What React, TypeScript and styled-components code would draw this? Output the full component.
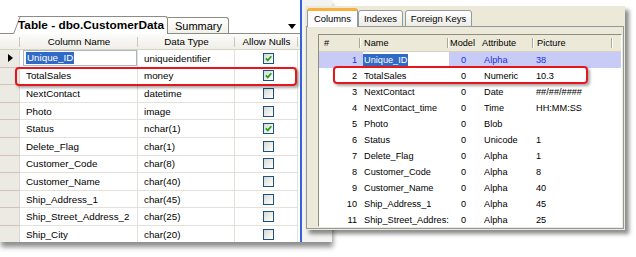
import React from "react"
import styled, { createGlobalStyle } from "styled-components"

const GlobalStyle = createGlobalStyle`
  *, *::before, *::after { box-sizing: border-box; }
  html, body { margin: 0; padding: 0; background: #ffffff; }
  body {
    width: 636px;
    height: 257px;
    overflow: hidden;
    font-family: "Liberation Sans", Arial, sans-serif;
    color: #000000;
  }
`

const Desktop = styled.div`
  position: relative;
  width: 636px;
  height: 257px;
  background: #ffffff;
  overflow: hidden;
`

/* ---------- left: table designer ---------- */

const designerCols = "20px 118px 97px 63px"

const DesignerWindow = styled.div`
  position: absolute;
  left: 0;
  top: 0;
  width: 332px;
  height: 242px;
  display: flex;
  background: #ffffff;
  box-shadow: 1px 5px 5px rgba(0, 0, 0, 0.45);
`

const DesignerMain = styled.div`
  width: 300px;
  flex-shrink: 0;
  display: flex;
  flex-direction: column;
  padding-top: 15px;
  overflow: hidden;
`

const Splitter = styled.div`
  width: 2px;
  flex-shrink: 0;
  background: #3562dc;
`

const DesignerAside = styled.div`
  flex: 1;
  background: #f3f3f0;
`

const DocTabStrip = styled.div`
  display: flex;
  align-items: flex-end;
  height: 19px;
  flex-shrink: 0;
  border-bottom: 1px solid #8d8c82;
`

const DocTab = styled.div<{ $active?: boolean }>`
  position: relative;
  z-index: ${({ $active }) => ($active ? 1 : 0)};
  margin-left: ${({ $active }) => ($active ? "18px" : "0")};
  margin-bottom: ${({ $active }) => ($active ? "-1px" : "0")};
  height: ${({ $active }) => ($active ? "18px" : "16px")};
  padding: ${({ $active }) => ($active ? "0 3px 1px 0" : "0 6px 0 7px")};
  display: flex;
  align-items: center;
  font-size: ${({ $active }) => ($active ? "11.8px" : "11px")};
  font-weight: ${({ $active }) => ($active ? 700 : 400)};
  white-space: nowrap;
  background: ${({ $active }) => ($active ? "#ffffff" : "linear-gradient(#ffffff, #f1f0ea)")};
  border-top: 1px solid #8d8c82;
  border-right: 1px solid #8d8c82;
  border-top-right-radius: 3px;

  &::before {
    content: "";
    display: ${({ $active }) => ($active ? "block" : "none")};
    position: absolute;
    left: -5px;
    top: -1px;
    bottom: 0;
    width: 14px;
    background: #ffffff;
    border-left: 1px solid #8d8c82;
    border-top: 1px solid #8d8c82;
    transform: skewX(-21deg);
    transform-origin: bottom left;
    z-index: -1;
  }
`

const DropArrow = styled.span`
  margin: 0 4px 4px auto;
  width: 0;
  height: 0;
  border-left: 4px solid transparent;
  border-right: 4px solid transparent;
  border-top: 5px solid #000000;
`

const DesignerHeader = styled.div`
  display: grid;
  grid-template-columns: ${designerCols};
  height: 16px;
  flex-shrink: 0;
  background: linear-gradient(#fcfcfa, #efeee7);
  border-bottom: 1px solid #d7d4c6;
`

const DesignerHeadCell = styled.div`
  position: relative;
  display: flex;
  align-items: center;
  justify-content: center;
  font-size: 9.8px;
  white-space: nowrap;

  &::after {
    content: "";
    position: absolute;
    right: 0;
    top: 3px;
    bottom: 2px;
    width: 1px;
    background: #cbc8b8;
  }
`

const DesignerRow = styled.div`
  position: relative;
  display: grid;
  grid-template-columns: ${designerCols};
  height: 17.6px;
  flex-shrink: 0;
`

const RowGutter = styled.div`
  display: flex;
  align-items: center;
  padding-left: 8px;
  background: #ecebe3;
  border-right: 1px solid #dcd9cc;
  border-bottom: 1px solid #d8bdbd;
`

const RowPointer = styled.span`
  width: 0;
  height: 0;
  border-top: 4px solid transparent;
  border-bottom: 4px solid transparent;
  border-left: 5px solid #000000;
`

const DesignerCell = styled.div<{ $center?: boolean }>`
  display: flex;
  align-items: center;
  justify-content: ${({ $center }) => ($center ? "center" : "flex-start")};
  padding-left: ${({ $center }) => ($center ? "4px" : "6px")};
  font-size: 9.8px;
  white-space: nowrap;
  overflow: hidden;
  border-right: 1px solid #e3e1d9;
  border-bottom: 1px solid #e3e1d9;
`

const EditBox = styled.div`
  flex: 1;
  align-self: stretch;
  margin: 0 0 1px -3px;
  padding-left: 2px;
  display: flex;
  align-items: center;
  border: 1px solid #aab7c9;
  background: #ffffff;
`

const Selection = styled.span`
  background: #316ac5;
  color: #ffffff;
  padding: 0 1px;
  line-height: 12px;
`

const CheckBox = styled.span`
  width: 11px;
  height: 11px;
  display: flex;
  align-items: center;
  justify-content: center;
  border: 1px solid #1c5180;
  background: linear-gradient(135deg, #d9d9d2, #ffffff);
`

const Callout = styled.div<{ $left: number; $top: number; $width: number; $height: number }>`
  position: absolute;
  left: ${({ $left }) => $left}px;
  top: ${({ $top }) => $top}px;
  width: ${({ $width }) => $width}px;
  height: ${({ $height }) => $height}px;
  border: 2px solid #e5161c;
  border-radius: 4px;
  box-shadow: 2px 2px 3px rgba(0, 0, 0, 0.35);
  pointer-events: none;
  z-index: 2;
`

/* ---------- right: attribute dialog ---------- */

const attrCols = "42px 88px 30px 55px 79px 1fr"

const DialogWindow = styled.div`
  position: absolute;
  left: 305px;
  top: 6px;
  width: 320px;
  height: 224px;
  display: flex;
  flex-direction: column;
  padding: 2px 1px 1px 1px;
  background: #ece9d8;
  box-shadow: 4px 4px 4px rgba(0, 0, 0, 0.45);
`

const DialogTabRow = styled.div`
  display: flex;
  align-items: flex-end;
  height: 19px;
  flex-shrink: 0;
  padding-left: 1px;
  position: relative;
  z-index: 1;
`

const DialogTab = styled.div<{ $active?: boolean }>`
  height: ${({ $active }) => ($active ? "19px" : "17px")};
  margin-right: ${({ $active }) => ($active ? "0" : "2px")};
  padding: ${({ $active }) => ($active ? "0 6px 1px" : "0 5px")};
  display: flex;
  align-items: center;
  font-size: 9.4px;
  white-space: nowrap;
  border: 1px solid #919b9c;
  border-bottom: ${({ $active }) => ($active ? "none" : "1px solid #919b9c")};
  border-top: ${({ $active }) => ($active ? "3px solid #f5b13b" : "1px solid #919b9c")};
  border-radius: 3px 3px 0 0;
  background: ${({ $active }) => ($active ? "#fcfcfe" : "linear-gradient(#ffffff, #ecebe6)")};
`

const DialogPanel = styled.div`
  flex: 1;
  display: flex;
  margin-top: -1px;
  padding: 7px 1px 1px 11px;
  border: 1px solid #919b9c;
  background: #ece9d8;
  overflow: hidden;
`

const AttrGrid = styled.div`
  flex: 1;
  display: flex;
  flex-direction: column;
  overflow: hidden;
  background: #ffffff;
  border: 1px solid;
  border-color: #8f8d80 #ffffff #ffffff #8f8d80;
`

const AttrHeader = styled.div`
  display: grid;
  grid-template-columns: ${attrCols};
  height: 17px;
  flex-shrink: 0;
  background: #ece9d8;
  border-bottom: 1px solid #d6d2c2;
`

const AttrHeadCell = styled.div<{ $pad: number; $sep?: boolean }>`
  position: relative;
  display: flex;
  align-items: center;
  padding-left: ${({ $pad }) => $pad}px;
  font-size: 9.2px;
  white-space: nowrap;

  &::after {
    content: "";
    display: ${({ $sep }) => ($sep ? "block" : "none")};
    position: absolute;
    right: 0;
    top: 3px;
    bottom: 3px;
    width: 2px;
    border-left: 1px solid #aca899;
    border-right: 1px solid #ffffff;
  }
`

const AttrRow = styled.div<{ $selected?: boolean }>`
  position: relative;
  display: grid;
  grid-template-columns: ${attrCols};
  height: 16px;
  flex-shrink: 0;
  background: ${({ $selected }) => ($selected ? "#c7cbf6" : "#ffffff")};
  color: ${({ $selected }) => ($selected ? "#1a2fe0" : "#000000")};
`

const AttrCell = styled.div<{ $pad: number; $right?: boolean }>`
  display: flex;
  align-items: center;
  justify-content: ${({ $right }) => ($right ? "flex-end" : "flex-start")};
  padding: ${({ $pad, $right }) => ($right ? `0 ${$pad}px 0 0` : `0 0 0 ${$pad}px`)};
  font-size: 9.2px;
  white-space: nowrap;
  overflow: hidden;
`

const NameEdit = styled.div`
  flex: 1;
  align-self: stretch;
  display: flex;
  align-items: center;
  margin-left: -1px;
  background: #ffffff;
`

/* ---------- data ---------- */

const designerRows = [
  { name: "Unique_ID", type: "uniqueidentifier", nulls: true },
  { name: "TotalSales", type: "money", nulls: true },
  { name: "NextContact", type: "datetime", nulls: false },
  { name: "Photo", type: "image", nulls: false },
  { name: "Status", type: "nchar(1)", nulls: true },
  { name: "Delete_Flag", type: "char(1)", nulls: false },
  { name: "Customer_Code", type: "char(8)", nulls: false },
  { name: "Customer_Name", type: "char(40)", nulls: false },
  { name: "Ship_Address_1", type: "char(45)", nulls: false },
  { name: "Ship_Street_Address_2", type: "char(25)", nulls: false },
  { name: "Ship_City", type: "char(20)", nulls: false },
]

// the last name is shown cut by its column in the dialog
const attributeRows = [
  { name: "Unique_ID", model: "0", attribute: "Alpha", picture: "38" },
  { name: "TotalSales", model: "0", attribute: "Numeric", picture: "10.3" },
  { name: "NextContact", model: "0", attribute: "Date", picture: "##/##/####" },
  { name: "NextContact_time", model: "0", attribute: "Time", picture: "HH:MM:SS" },
  { name: "Photo", model: "0", attribute: "Blob", picture: "" },
  { name: "Status", model: "0", attribute: "Unicode", picture: "1" },
  { name: "Delete_Flag", model: "0", attribute: "Alpha", picture: "1" },
  { name: "Customer_Code", model: "0", attribute: "Alpha", picture: "8" },
  { name: "Customer_Name", model: "0", attribute: "Alpha", picture: "40" },
  { name: "Ship_Address_1", model: "0", attribute: "Alpha", picture: "45" },
  { name: "Ship_Street_Addres:", model: "0", attribute: "Alpha", picture: "25" },
]

const Check = () => (
  <svg width="7" height="7" viewBox="0 0 7 7">
    <path d="M0.8 3.4 L2.8 5.4 L6.3 1.2" fill="none" stroke="#21a121" strokeWidth="1.7" />
  </svg>
)

const TableDesigner: React.FC = () => (
  <DesignerWindow>
    <DesignerMain>
      <DocTabStrip>
        <DocTab $active>Table - dbo.CustomerData</DocTab>
        <DocTab>Summary</DocTab>
        <DropArrow />
      </DocTabStrip>
      <DesignerHeader>
        <DesignerHeadCell />
        <DesignerHeadCell>Column Name</DesignerHeadCell>
        <DesignerHeadCell>Data Type</DesignerHeadCell>
        <DesignerHeadCell>Allow Nulls</DesignerHeadCell>
      </DesignerHeader>
      {designerRows.map((row, i) => (
        <DesignerRow key={row.name}>
          <RowGutter>{i === 0 && <RowPointer />}</RowGutter>
          <DesignerCell>
            {i === 0 ? (
              <EditBox>
                <Selection>{row.name}</Selection>
              </EditBox>
            ) : (
              row.name
            )}
          </DesignerCell>
          <DesignerCell>{row.type}</DesignerCell>
          <DesignerCell $center>
            <CheckBox>{row.nulls && <Check />}</CheckBox>
          </DesignerCell>
          {i === 1 && <Callout $left={15} $top={-1} $width={282} $height={19} />}
        </DesignerRow>
      ))}
    </DesignerMain>
    <Splitter />
    <DesignerAside />
  </DesignerWindow>
)

const AttributeDialog: React.FC = () => (
  <DialogWindow>
    <DialogTabRow>
      <DialogTab $active>Columns</DialogTab>
      <DialogTab>Indexes</DialogTab>
      <DialogTab>Foreign Keys</DialogTab>
    </DialogTabRow>
    <DialogPanel>
      <AttrGrid>
        <AttrHeader>
          <AttrHeadCell $pad={5} $sep>#</AttrHeadCell>
          <AttrHeadCell $pad={3} $sep>Name</AttrHeadCell>
          <AttrHeadCell $pad={1}>Model</AttrHeadCell>
          <AttrHeadCell $pad={3} $sep>Attribute</AttrHeadCell>
          <AttrHeadCell $pad={3} $sep>Picture</AttrHeadCell>
          <AttrHeadCell $pad={0} />
        </AttrHeader>
        {attributeRows.map((row, i) => (
          <AttrRow key={row.name} $selected={i === 0}>
            <AttrCell $pad={4} $right>
              {i + 1}
            </AttrCell>
            <AttrCell $pad={3}>
              {i === 0 ? (
                <NameEdit>
                  <Selection>{row.name}</Selection>
                </NameEdit>
              ) : (
                row.name
              )}
            </AttrCell>
            <AttrCell $pad={12}>{row.model}</AttrCell>
            <AttrCell $pad={5}>{row.attribute}</AttrCell>
            <AttrCell $pad={2}>{row.picture}</AttrCell>
            <AttrCell $pad={0} />
            {i === 1 && <Callout $left={14} $top={-2} $width={255} $height={18} />}
          </AttrRow>
        ))}
      </AttrGrid>
    </DialogPanel>
  </DialogWindow>
)

export default function App() {
  return (
    <>
      <GlobalStyle />
      <Desktop>
        <TableDesigner />
        <AttributeDialog />
      </Desktop>
    </>
  )
}
